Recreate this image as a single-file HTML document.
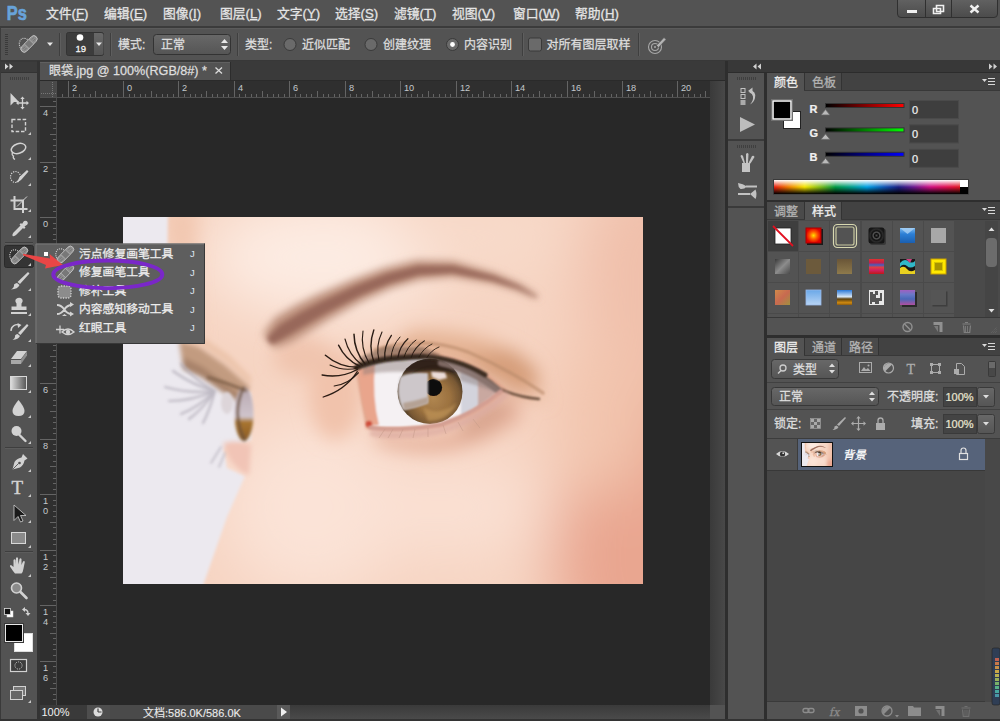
<!DOCTYPE html>
<html><head><meta charset="utf-8"><title>Photoshop</title>
<style>
html,body{margin:0;padding:0;background:#535353;}
body{width:1000px;height:721px;overflow:hidden;position:relative;font-family:"Liberation Sans",sans-serif;}
#r div{position:absolute;}
#ov{position:absolute;left:0;top:0;}
#ov text{font-family:"Liberation Sans","Noto Sans CJK SC",sans-serif;}
</style></head><body>

<div id="r">
<div style="left:0px;top:0px;width:1000px;height:721px;background:#535353;"></div>
<div style="left:0px;top:26px;width:1000px;height:2px;background:#3b3b3b;"></div>
<div style="left:0px;top:60px;width:1000px;height:2px;background:#383838;"></div>
<div style="left:0px;top:28px;width:1000px;height:1px;background:#5b5b5b;"></div>
<div style="left:0px;top:28px;width:1px;height:32px;background:#3c3c3c;"></div>
<div style="left:5px;top:34px;width:3px;height:1px;background:#3a3a3a;"></div>
<div style="left:5px;top:36px;width:3px;height:1px;background:#3a3a3a;"></div>
<div style="left:5px;top:38px;width:3px;height:1px;background:#3a3a3a;"></div>
<div style="left:5px;top:40px;width:3px;height:1px;background:#3a3a3a;"></div>
<div style="left:5px;top:42px;width:3px;height:1px;background:#3a3a3a;"></div>
<div style="left:5px;top:44px;width:3px;height:1px;background:#3a3a3a;"></div>
<div style="left:5px;top:46px;width:3px;height:1px;background:#3a3a3a;"></div>
<div style="left:5px;top:48px;width:3px;height:1px;background:#3a3a3a;"></div>
<div style="left:5px;top:50px;width:3px;height:1px;background:#3a3a3a;"></div>
<div style="left:5px;top:52px;width:3px;height:1px;background:#3a3a3a;"></div>
<div style="left:5px;top:54px;width:3px;height:1px;background:#3a3a3a;"></div>
<div style="left:59px;top:33px;width:1px;height:23px;background:#3f3f3f;"></div>
<div style="left:60px;top:33px;width:1px;height:23px;background:#5e5e5e;"></div>
<div style="left:110px;top:33px;width:1px;height:23px;background:#3f3f3f;"></div>
<div style="left:111px;top:33px;width:1px;height:23px;background:#5e5e5e;"></div>
<div style="left:237px;top:33px;width:1px;height:23px;background:#3f3f3f;"></div>
<div style="left:238px;top:33px;width:1px;height:23px;background:#5e5e5e;"></div>
<div style="left:522px;top:33px;width:1px;height:23px;background:#3f3f3f;"></div>
<div style="left:523px;top:33px;width:1px;height:23px;background:#5e5e5e;"></div>
<div style="left:638px;top:33px;width:1px;height:23px;background:#3f3f3f;"></div>
<div style="left:639px;top:33px;width:1px;height:23px;background:#5e5e5e;"></div>
<div style="left:0px;top:61px;width:1px;height:660px;background:#3a3a3a;"></div>
<div style="left:1px;top:62px;width:36px;height:10px;background:#3c3c3c;"></div>
<div style="left:1px;top:72px;width:36px;height:1px;background:#333;"></div>
<div style="left:37px;top:61px;width:3px;height:660px;background:#333;"></div>
<div style="left:10px;top:77px;width:1px;height:3px;background:#3f3f3f;"></div>
<div style="left:12px;top:77px;width:1px;height:3px;background:#3f3f3f;"></div>
<div style="left:14px;top:77px;width:1px;height:3px;background:#3f3f3f;"></div>
<div style="left:16px;top:77px;width:1px;height:3px;background:#3f3f3f;"></div>
<div style="left:18px;top:77px;width:1px;height:3px;background:#3f3f3f;"></div>
<div style="left:20px;top:77px;width:1px;height:3px;background:#3f3f3f;"></div>
<div style="left:22px;top:77px;width:1px;height:3px;background:#3f3f3f;"></div>
<div style="left:24px;top:77px;width:1px;height:3px;background:#3f3f3f;"></div>
<div style="left:26px;top:77px;width:1px;height:3px;background:#3f3f3f;"></div>
<div style="left:28px;top:77px;width:1px;height:3px;background:#3f3f3f;"></div>
<div style="left:40px;top:61px;width:688px;height:19px;background:#3a3a3a;"></div>
<div style="left:40px;top:62px;width:190px;height:18px;background:#535353;"></div>
<div style="left:40px;top:62px;width:190px;height:1px;background:#606060;"></div>
<div style="left:230px;top:62px;width:1px;height:18px;background:#2c2c2c;"></div>
<div style="left:40px;top:80px;width:688px;height:1px;background:#2a2a2a;"></div>
<div style="left:40px;top:81px;width:670px;height:17px;background:#2f2f2f;"></div>
<div style="left:40px;top:98px;width:17px;height:607px;background:#2f2f2f;"></div>
<div style="left:40px;top:81px;width:16px;height:16px;background:#494949;"></div>
<div style="left:56px;top:81px;width:1px;height:17px;background:#4c4c4c;"></div>
<div style="left:40px;top:97px;width:670px;height:1px;background:#505050;"></div>
<div style="left:56px;top:98px;width:1px;height:607px;background:#4c4c4c;"></div>
<div style="left:57px;top:98px;width:653px;height:607px;background:#282828;"></div>
<div style="left:710px;top:81px;width:15px;height:624px;background:linear-gradient(90deg,#3a3a3a,#484848);"></div>
<div style="left:725px;top:61px;width:3px;height:660px;background:#2e2e2e;"></div>
<div style="left:40px;top:705px;width:670px;height:14px;background:linear-gradient(180deg,#3a3a3a,#4a4a4a);"></div>
<div style="left:710px;top:705px;width:15px;height:14px;background:#535353;"></div>
<div style="left:0px;top:719px;width:1000px;height:2px;background:#333;"></div>
<div style="left:40px;top:705px;width:47px;height:14px;background:#3a3a3a;"></div>
<div style="left:87px;top:705px;width:23px;height:14px;background:#4e4e4e;"></div>
<div style="left:110px;top:705px;width:167px;height:14px;background:#4a4a4a;"></div>
<div style="left:277px;top:705px;width:13px;height:14px;background:#5a5a5a;"></div>
<div style="left:728px;top:61px;width:272px;height:12px;background:#383838;"></div>
<div style="left:728px;top:72px;width:272px;height:1px;background:#2c2c2c;"></div>
<div style="left:728px;top:73px;width:36px;height:646px;background:#535353;"></div>
<div style="left:764px;top:73px;width:3px;height:648px;background:#2e2e2e;"></div>
<div style="left:728px;top:139px;width:36px;height:2px;background:#3a3a3a;"></div>
<div style="left:728px;top:206px;width:36px;height:2px;background:#3a3a3a;"></div>
<div style="left:737px;top:77px;width:1px;height:3px;background:#3f3f3f;"></div>
<div style="left:739px;top:77px;width:1px;height:3px;background:#3f3f3f;"></div>
<div style="left:741px;top:77px;width:1px;height:3px;background:#3f3f3f;"></div>
<div style="left:743px;top:77px;width:1px;height:3px;background:#3f3f3f;"></div>
<div style="left:745px;top:77px;width:1px;height:3px;background:#3f3f3f;"></div>
<div style="left:747px;top:77px;width:1px;height:3px;background:#3f3f3f;"></div>
<div style="left:749px;top:77px;width:1px;height:3px;background:#3f3f3f;"></div>
<div style="left:751px;top:77px;width:1px;height:3px;background:#3f3f3f;"></div>
<div style="left:753px;top:77px;width:1px;height:3px;background:#3f3f3f;"></div>
<div style="left:755px;top:77px;width:1px;height:3px;background:#3f3f3f;"></div>
<div style="left:737px;top:145px;width:1px;height:3px;background:#3f3f3f;"></div>
<div style="left:739px;top:145px;width:1px;height:3px;background:#3f3f3f;"></div>
<div style="left:741px;top:145px;width:1px;height:3px;background:#3f3f3f;"></div>
<div style="left:743px;top:145px;width:1px;height:3px;background:#3f3f3f;"></div>
<div style="left:745px;top:145px;width:1px;height:3px;background:#3f3f3f;"></div>
<div style="left:747px;top:145px;width:1px;height:3px;background:#3f3f3f;"></div>
<div style="left:749px;top:145px;width:1px;height:3px;background:#3f3f3f;"></div>
<div style="left:751px;top:145px;width:1px;height:3px;background:#3f3f3f;"></div>
<div style="left:753px;top:145px;width:1px;height:3px;background:#3f3f3f;"></div>
<div style="left:755px;top:145px;width:1px;height:3px;background:#3f3f3f;"></div>
<div style="left:767px;top:73px;width:233px;height:17px;background:#424242;"></div>
<div style="left:767px;top:90px;width:233px;height:1px;background:#383838;"></div>
<div style="left:767px;top:73px;width:37px;height:18px;background:#535353;"></div>
<div style="left:804px;top:73px;width:1px;height:17px;background:#333;"></div>
<div style="left:805px;top:73px;width:36px;height:17px;background:#4a4a4a;"></div>
<div style="left:841px;top:73px;width:1px;height:17px;background:#333;"></div>
<div style="left:767px;top:91px;width:233px;height:109px;background:#535353;"></div>
<div style="left:767px;top:200px;width:233px;height:3px;background:#2e2e2e;"></div>
<div style="left:767px;top:202px;width:233px;height:17px;background:#424242;"></div>
<div style="left:767px;top:219px;width:233px;height:1px;background:#383838;"></div>
<div style="left:767px;top:202px;width:37px;height:17px;background:#4a4a4a;"></div>
<div style="left:804px;top:202px;width:1px;height:17px;background:#333;"></div>
<div style="left:805px;top:202px;width:36px;height:18px;background:#535353;"></div>
<div style="left:841px;top:202px;width:1px;height:17px;background:#333;"></div>
<div style="left:767px;top:220px;width:233px;height:1px;background:#4a4a4a;"></div>
<div style="left:767px;top:221px;width:233px;height:96px;background:#4a4a4a;"></div>
<div style="left:768px;top:221px;width:30px;height:30px;background:#3e3e3e;"></div>
<div style="left:799px;top:221px;width:30px;height:30px;background:#535353;"></div>
<div style="left:830px;top:221px;width:30px;height:30px;background:#535353;"></div>
<div style="left:862px;top:221px;width:30px;height:30px;background:#535353;"></div>
<div style="left:893px;top:221px;width:30px;height:30px;background:#535353;"></div>
<div style="left:924px;top:221px;width:30px;height:30px;background:#535353;"></div>
<div style="left:768px;top:252px;width:30px;height:30px;background:#535353;"></div>
<div style="left:799px;top:252px;width:30px;height:30px;background:#535353;"></div>
<div style="left:830px;top:252px;width:30px;height:30px;background:#535353;"></div>
<div style="left:862px;top:252px;width:30px;height:30px;background:#535353;"></div>
<div style="left:893px;top:252px;width:30px;height:30px;background:#535353;"></div>
<div style="left:924px;top:252px;width:30px;height:30px;background:#535353;"></div>
<div style="left:768px;top:283px;width:30px;height:30px;background:#535353;"></div>
<div style="left:799px;top:283px;width:30px;height:30px;background:#535353;"></div>
<div style="left:830px;top:283px;width:30px;height:30px;background:#535353;"></div>
<div style="left:862px;top:283px;width:30px;height:30px;background:#535353;"></div>
<div style="left:893px;top:283px;width:30px;height:30px;background:#535353;"></div>
<div style="left:924px;top:283px;width:30px;height:30px;background:#535353;"></div>
<div style="left:768px;top:314px;width:30px;height:3px;background:#535353;"></div>
<div style="left:799px;top:314px;width:30px;height:3px;background:#535353;"></div>
<div style="left:830px;top:314px;width:30px;height:3px;background:#535353;"></div>
<div style="left:862px;top:314px;width:30px;height:3px;background:#535353;"></div>
<div style="left:893px;top:314px;width:30px;height:3px;background:#535353;"></div>
<div style="left:924px;top:314px;width:30px;height:3px;background:#535353;"></div>
<div style="left:985px;top:221px;width:13px;height:96px;background:#454545;"></div>
<div style="left:986px;top:238px;width:11px;height:29px;background:#6c6c6c;border-radius:4px;"></div>
<div style="left:767px;top:317px;width:233px;height:1px;background:#383838;"></div>
<div style="left:767px;top:318px;width:233px;height:17px;background:#535353;"></div>
<div style="left:767px;top:335px;width:233px;height:3px;background:#2e2e2e;"></div>
<div style="left:767px;top:338px;width:233px;height:17px;background:#424242;"></div>
<div style="left:767px;top:355px;width:233px;height:1px;background:#383838;"></div>
<div style="left:767px;top:338px;width:37px;height:18px;background:#535353;"></div>
<div style="left:804px;top:338px;width:1px;height:17px;background:#333;"></div>
<div style="left:805px;top:338px;width:36px;height:17px;background:#4a4a4a;"></div>
<div style="left:841px;top:338px;width:1px;height:17px;background:#333;"></div>
<div style="left:842px;top:338px;width:36px;height:17px;background:#4a4a4a;"></div>
<div style="left:878px;top:338px;width:1px;height:17px;background:#333;"></div>
<div style="left:767px;top:356px;width:233px;height:1px;background:#535353;"></div>
<div style="left:767px;top:357px;width:233px;height:82px;background:#535353;"></div>
<div style="left:767px;top:382px;width:233px;height:1px;background:#414141;"></div>
<div style="left:767px;top:409px;width:233px;height:1px;background:#414141;"></div>
<div style="left:767px;top:438px;width:233px;height:1px;background:#3c3c3c;"></div>
<div style="left:767px;top:439px;width:233px;height:263px;background:#464646;"></div>
<div style="left:767px;top:702px;width:233px;height:17px;background:#535353;"></div>
<div style="left:767px;top:701px;width:233px;height:1px;background:#3a3a3a;"></div>
<div style="left:767px;top:439px;width:31px;height:31px;background:#535353;"></div>
<div style="left:798px;top:439px;width:187px;height:31px;background:#56637a;"></div>
<div style="left:767px;top:470px;width:218px;height:1px;background:#383838;"></div>
<div style="left:797px;top:439px;width:1px;height:31px;background:#3c3c3c;"></div>
<div style="left:985px;top:439px;width:15px;height:263px;background:#484848;"></div>
<div style="left:5px;top:242px;width:28px;height:1px;background:#3e3e3e;"></div>
<div style="left:5px;top:243px;width:28px;height:1px;background:#5c5c5c;"></div>
<div style="left:5px;top:447px;width:28px;height:1px;background:#3e3e3e;"></div>
<div style="left:5px;top:448px;width:28px;height:1px;background:#5c5c5c;"></div>
<div style="left:5px;top:551px;width:28px;height:1px;background:#3e3e3e;"></div>
<div style="left:5px;top:552px;width:28px;height:1px;background:#5c5c5c;"></div>
</div>
<svg id="ov" width="1000" height="721" viewBox="0 0 1000 721">
<defs>

<linearGradient id="btn" x1="0" y1="0" x2="0" y2="1"><stop offset="0" stop-color="#686868"/><stop offset="1" stop-color="#555"/></linearGradient>
<linearGradient id="wbtn" x1="0" y1="0" x2="0" y2="1"><stop offset="0" stop-color="#626262"/><stop offset="1" stop-color="#4b4b4b"/></linearGradient>
<linearGradient id="gr" x1="0" y1="0" x2="1" y2="0"><stop offset="0" stop-color="#000"/><stop offset="1" stop-color="#f00"/></linearGradient>
<linearGradient id="gg" x1="0" y1="0" x2="1" y2="0"><stop offset="0" stop-color="#000"/><stop offset="1" stop-color="#0f0"/></linearGradient>
<linearGradient id="gb" x1="0" y1="0" x2="1" y2="0"><stop offset="0" stop-color="#000"/><stop offset="1" stop-color="#00f"/></linearGradient>
<linearGradient id="spec" x1="0" y1="0" x2="1" y2="0">
<stop offset="0" stop-color="#e81c10"/><stop offset="0.08" stop-color="#f08000"/><stop offset="0.165" stop-color="#f4e400"/><stop offset="0.26" stop-color="#70b820"/><stop offset="0.33" stop-color="#009a44"/><stop offset="0.42" stop-color="#00a090"/><stop offset="0.5" stop-color="#00a0e4"/><stop offset="0.6" stop-color="#1050b0"/><stop offset="0.67" stop-color="#1c2084"/><stop offset="0.75" stop-color="#6a1a90"/><stop offset="0.84" stop-color="#d01084"/><stop offset="0.93" stop-color="#e01050"/><stop offset="1" stop-color="#e01820"/></linearGradient>
<linearGradient id="specv" x1="0" y1="0" x2="0" y2="1"><stop offset="0" stop-color="#fff"/><stop offset="0.5" stop-color="#fff" stop-opacity="0"/><stop offset="0.5" stop-color="#000" stop-opacity="0"/><stop offset="1" stop-color="#000"/></linearGradient>

<clipPath id="pclip"><rect x="0" y="0" width="520" height="367"/></clipPath>
<clipPath id="irisclip"><circle cx="307" cy="174.500" r="33"/></clipPath>
<clipPath id="eyeclip"><path d="M236 152 C250 144 270 141 300 140 C330 141 356 153 377 173 C362 186 345 197 318 206 C290 211 262 211 247 209 C243 190 239 168 236 152 Z"/></clipPath>
<filter id="b30" x="-50%" y="-50%" width="200%" height="200%"><feGaussianBlur stdDeviation="30"/></filter>
<filter id="b12" x="-50%" y="-50%" width="200%" height="200%"><feGaussianBlur stdDeviation="9"/></filter>
<filter id="b5" x="-50%" y="-50%" width="200%" height="200%"><feGaussianBlur stdDeviation="4"/></filter>
<filter id="b3" x="-50%" y="-50%" width="200%" height="200%"><feGaussianBlur stdDeviation="2.500"/></filter>
<filter id="b2" x="-50%" y="-50%" width="200%" height="200%"><feGaussianBlur stdDeviation="1.600"/></filter>
<filter id="b1" x="-50%" y="-50%" width="200%" height="200%"><feGaussianBlur stdDeviation="0.900"/></filter>
<filter id="b05" x="-50%" y="-50%" width="200%" height="200%"><feGaussianBlur stdDeviation="0.450"/></filter>
<linearGradient id="fariris" x1="0" y1="0" x2="0" y2="1"><stop offset="0" stop-color="#b8a8b0"/><stop offset="0.55" stop-color="#cfc4cc"/><stop offset="0.65" stop-color="#a8742e"/><stop offset="1" stop-color="#8a5c28"/></linearGradient>
<radialGradient id="iris" cx="0.55" cy="0.6" r="0.52"><stop offset="0" stop-color="#b08650"/><stop offset="0.5" stop-color="#9c7240"/><stop offset="0.8" stop-color="#785834"/><stop offset="0.95" stop-color="#4c3a24"/><stop offset="1" stop-color="#5e4c34"/></radialGradient>
<linearGradient id="gradtool" x1="0" y1="0" x2="1" y2="0"><stop offset="0" stop-color="#e0e0e0"/><stop offset="1" stop-color="#555"/></linearGradient>
<radialGradient id="s1"><stop offset="0" stop-color="#ffe000"/><stop offset="0.5" stop-color="#ff5a00"/><stop offset="1" stop-color="#e00000"/></radialGradient>
<radialGradient id="s3"><stop offset="0" stop-color="#4a4a4a"/><stop offset="0.25" stop-color="#0c0c0c"/><stop offset="0.42" stop-color="#5a5a5a"/><stop offset="0.58" stop-color="#101010"/><stop offset="0.8" stop-color="#2c2c2c"/><stop offset="1" stop-color="#161616"/></radialGradient>
<linearGradient id="s4" x1="0" y1="0" x2="0" y2="1"><stop offset="0" stop-color="#7ab8ee"/><stop offset="0.4" stop-color="#2c7fd6"/><stop offset="1" stop-color="#1a5fb0"/></linearGradient>
<linearGradient id="s6" x1="0" y1="0" x2="1" y2="1"><stop offset="0" stop-color="#3a3a3a"/><stop offset="0.5" stop-color="#8c8c8c"/><stop offset="1" stop-color="#4a4a4a"/></linearGradient>
<linearGradient id="s8" x1="0" y1="0" x2="0" y2="1"><stop offset="0" stop-color="#6a5638"/><stop offset="1" stop-color="#8e7a4c"/></linearGradient>
<linearGradient id="s9" x1="0" y1="0" x2="0" y2="1"><stop offset="0" stop-color="#e03030"/><stop offset="0.25" stop-color="#c02050"/><stop offset="0.4" stop-color="#4060c0"/><stop offset="0.55" stop-color="#e04040"/><stop offset="0.75" stop-color="#d02060"/><stop offset="1" stop-color="#c01818"/></linearGradient>
<linearGradient id="s12" x1="0" y1="0" x2="1" y2="1"><stop offset="0" stop-color="#d08a4a"/><stop offset="0.5" stop-color="#c86a50"/><stop offset="1" stop-color="#a09040"/></linearGradient>
<linearGradient id="s13" x1="0" y1="0" x2="0" y2="1"><stop offset="0" stop-color="#6aa8e8"/><stop offset="1" stop-color="#b8d4f4"/></linearGradient>
<linearGradient id="s14" x1="0" y1="0" x2="0" y2="1"><stop offset="0" stop-color="#2a78d8"/><stop offset="0.45" stop-color="#d8e8f8"/><stop offset="0.6" stop-color="#5a4010"/><stop offset="0.85" stop-color="#d08a10"/><stop offset="1" stop-color="#8a5a10"/></linearGradient>
<linearGradient id="s16" x1="0" y1="0" x2="0" y2="1"><stop offset="0" stop-color="#a060c0"/><stop offset="0.3" stop-color="#6a78c8"/><stop offset="0.6" stop-color="#4a68b8"/><stop offset="1" stop-color="#b050a0"/></linearGradient>

</defs>
<g transform="translate(6.8,19.6) scale(0.78,1)"><text x="0" y="0" font-size="21" font-weight="bold" fill="#68a3da" stroke="#68a3da" stroke-width="0.7">Ps</text></g>
<text x="46" y="18" font-size="12.8" fill="#e4e4e4" stroke="#e4e4e4" stroke-width="0.28">文件<tspan font-size="13.2">(<tspan text-decoration="underline">F</tspan>)</tspan></text>
<text x="104" y="18" font-size="12.8" fill="#e4e4e4" stroke="#e4e4e4" stroke-width="0.28">编辑<tspan font-size="13.2">(<tspan text-decoration="underline">E</tspan>)</tspan></text>
<text x="163" y="18" font-size="12.8" fill="#e4e4e4" stroke="#e4e4e4" stroke-width="0.28">图像<tspan font-size="13.2">(<tspan text-decoration="underline">I</tspan>)</tspan></text>
<text x="220" y="18" font-size="12.8" fill="#e4e4e4" stroke="#e4e4e4" stroke-width="0.28">图层<tspan font-size="13.2">(<tspan text-decoration="underline">L</tspan>)</tspan></text>
<text x="277" y="18" font-size="12.8" fill="#e4e4e4" stroke="#e4e4e4" stroke-width="0.28">文字<tspan font-size="13.2">(<tspan text-decoration="underline">Y</tspan>)</tspan></text>
<text x="335" y="18" font-size="12.8" fill="#e4e4e4" stroke="#e4e4e4" stroke-width="0.28">选择<tspan font-size="13.2">(<tspan text-decoration="underline">S</tspan>)</tspan></text>
<text x="394" y="18" font-size="12.8" fill="#e4e4e4" stroke="#e4e4e4" stroke-width="0.28">滤镜<tspan font-size="13.2">(<tspan text-decoration="underline">T</tspan>)</tspan></text>
<text x="452" y="18" font-size="12.8" fill="#e4e4e4" stroke="#e4e4e4" stroke-width="0.28">视图<tspan font-size="13.2">(<tspan text-decoration="underline">V</tspan>)</tspan></text>
<text x="513" y="18" font-size="12.8" fill="#e4e4e4" stroke="#e4e4e4" stroke-width="0.28">窗口<tspan font-size="13.2">(<tspan text-decoration="underline">W</tspan>)</tspan></text>
<text x="575" y="18" font-size="12.8" fill="#e4e4e4" stroke="#e4e4e4" stroke-width="0.28">帮助<tspan font-size="13.2">(<tspan text-decoration="underline">H</tspan>)</tspan></text>
<path d="M897.5 -1 V14 Q897.5 17.5 901 17.5 H994 Q997.5 17.5 997.5 14 V-1 Z" fill="url(#wbtn)" stroke="#303030" stroke-width="1"/>
<path d="M925.5 0 V17 M951.5 0 V17" stroke="#303030" stroke-width="1"/>
<rect x="907" y="10" width="10" height="3" fill="#f0f0f0"/>
<path d="M936.5 5.5 h7 v6 h-7 z M933.5 8.5 h7 v5 h-7 z" fill="none" stroke="#f0f0f0" stroke-width="1.6"/>
<path d="M970.5 5.5 L978.5 12.5 M978.5 5.5 L970.5 12.5" stroke="#f0f0f0" stroke-width="2.4"/>
<path d="M47 42.5 h6 l-3 3.500 z" fill="#e8e8e8"/>
<rect x="66.500" y="32.500" width="37" height="23" rx="2" fill="#3c3c3c" stroke="#333"/>
<path d="M94 33 h7 q2.500 0 2.500 2.500 v17 q0 2.500 -2.500 2.500 h-7 z" fill="url(#btn)"/>
<circle cx="80" cy="37.500" r="3.300" fill="#fff"/>
<path d="M96 42.500 h6 l-3 3.500 z" fill="#e8e8e8"/>
<text x="75.5" y="52" font-size="9.5" fill="#f4f4f4" stroke="#f4f4f4" stroke-width="0.29">19</text>
<text x="118" y="48.5" font-size="12" fill="#dedede" stroke="#dedede" stroke-width="0.26">模式:</text>
<rect x="153.500" y="34.500" width="77" height="20" rx="3" fill="url(#btn)" stroke="#333"/>
<text x="161" y="49" font-size="12" fill="#dedede" stroke="#dedede" stroke-width="0.26">正常</text>
<path d="M221 43 l3.500 -4 l3.500 4 z M221 46 l3.500 4 l3.500 -4 z" fill="#e8e8e8"/>
<text x="245" y="48.5" font-size="12" fill="#dedede" stroke="#dedede" stroke-width="0.26">类型:</text>
<circle cx="290" cy="44.500" r="6" fill="#6a6a6a" stroke="#3a3a3a" stroke-width="1"/>
<text x="302" y="48.5" font-size="12" fill="#dedede" stroke="#dedede" stroke-width="0.26">近似匹配</text>
<circle cx="371" cy="44.500" r="6" fill="#6a6a6a" stroke="#3a3a3a" stroke-width="1"/>
<text x="383" y="48.5" font-size="12" fill="#dedede" stroke="#dedede" stroke-width="0.26">创建纹理</text>
<circle cx="452.500" cy="44.500" r="6" fill="#6a6a6a" stroke="#3a3a3a" stroke-width="1"/>
<circle cx="452.500" cy="44.500" r="2.400" fill="#fff"/>
<text x="464" y="48.5" font-size="12" fill="#dedede" stroke="#dedede" stroke-width="0.26">内容识别</text>
<rect x="528.500" y="38" width="13" height="13" rx="2" fill="#6a6a6a" stroke="#3a3a3a"/>
<text x="546.5" y="48.5" font-size="12" fill="#dedede" stroke="#dedede" stroke-width="0.26">对所有图层取样</text>
<path d="M5 63.5 l3.500 3 l-3.500 3 z M9.500 63.500 l3.500 3 l-3.500 3 z" fill="#d8d8d8"/>
<text x="49" y="75" font-size="12" fill="#dedede" stroke="#dedede" stroke-width="0.26">眼袋<tspan font-size="12.6">.jpg @ 100%(RGB/8#) *</tspan></text>
<path d="M215.500 67.500 l6.500 6 M222 67.500 l-6.500 6" stroke="#ddd" stroke-width="1.300"/>
<path d="M52.500 82 V97 M41 93.500 H56" stroke="#777" stroke-width="1" stroke-dasharray="1 1"/>
<path d="M62.5 97 v-3 M68.5 97 v-16 M73.5 97 v-3 M79.5 97 v-3 M84.5 97 v-3 M90.5 97 v-3 M95.5 97 v-6 M101.5 97 v-3 M106.5 97 v-3 M112.5 97 v-3 M117.5 97 v-3 M123.5 97 v-16 M129.5 97 v-3 M134.5 97 v-3 M140.5 97 v-3 M145.5 97 v-3 M151.5 97 v-6 M156.5 97 v-3 M162.5 97 v-3 M167.5 97 v-3 M173.5 97 v-3 M178.5 97 v-16 M184.5 97 v-3 M190.5 97 v-3 M195.5 97 v-3 M201.5 97 v-3 M206.5 97 v-6 M212.5 97 v-3 M217.5 97 v-3 M223.5 97 v-3 M228.5 97 v-3 M234.5 97 v-16 M239.5 97 v-3 M245.5 97 v-3 M251.5 97 v-3 M256.5 97 v-3 M262.5 97 v-6 M267.5 97 v-3 M273.5 97 v-3 M278.5 97 v-3 M284.5 97 v-3 M289.5 97 v-16 M295.5 97 v-3 M300.5 97 v-3 M306.5 97 v-3 M311.5 97 v-3 M317.5 97 v-6 M323.5 97 v-3 M328.5 97 v-3 M334.5 97 v-3 M339.5 97 v-3 M345.5 97 v-16 M350.5 97 v-3 M356.5 97 v-3 M361.5 97 v-3 M367.5 97 v-3 M372.5 97 v-6 M378.5 97 v-3 M384.5 97 v-3 M389.5 97 v-3 M395.5 97 v-3 M400.5 97 v-16 M406.5 97 v-3 M411.5 97 v-3 M417.5 97 v-3 M422.5 97 v-3 M428.5 97 v-6 M433.5 97 v-3 M439.5 97 v-3 M445.5 97 v-3 M450.5 97 v-3 M456.5 97 v-16 M461.5 97 v-3 M467.5 97 v-3 M472.5 97 v-3 M478.5 97 v-3 M483.5 97 v-6 M489.5 97 v-3 M494.5 97 v-3 M500.5 97 v-3 M506.5 97 v-3 M511.5 97 v-16 M517.5 97 v-3 M522.5 97 v-3 M528.5 97 v-3 M533.5 97 v-3 M539.5 97 v-6 M544.5 97 v-3 M550.5 97 v-3 M555.5 97 v-3 M561.5 97 v-3 M567.5 97 v-16 M572.5 97 v-3 M578.5 97 v-3 M583.5 97 v-3 M589.5 97 v-3 M594.5 97 v-6 M600.5 97 v-3 M605.5 97 v-3 M611.5 97 v-3 M616.5 97 v-3 M622.5 97 v-16 M628.5 97 v-3 M633.5 97 v-3 M639.5 97 v-3 M644.5 97 v-3 M650.5 97 v-6 M655.5 97 v-3 M661.5 97 v-3 M666.5 97 v-3 M672.5 97 v-3 M677.5 97 v-16 M683.5 97 v-3 M688.5 97 v-3 M694.5 97 v-3 M700.5 97 v-3 M705.5 97 v-6 M56 101.5 h-3 M56 106.5 h-16 M56 112.5 h-3 M56 117.5 h-3 M56 123.5 h-3 M56 128.5 h-3 M56 134.5 h-6 M56 139.5 h-3 M56 145.5 h-3 M56 150.5 h-3 M56 156.5 h-3 M56 162.5 h-16 M56 167.5 h-3 M56 173.5 h-3 M56 178.5 h-3 M56 184.5 h-3 M56 189.5 h-6 M56 195.5 h-3 M56 200.5 h-3 M56 206.5 h-3 M56 211.5 h-3 M56 217.5 h-16 M56 223.5 h-3 M56 228.5 h-3 M56 234.5 h-3 M56 239.5 h-3 M56 245.5 h-6 M56 250.5 h-3 M56 256.5 h-3 M56 261.5 h-3 M56 267.5 h-3 M56 272.5 h-16 M56 278.5 h-3 M56 284.5 h-3 M56 289.5 h-3 M56 295.5 h-3 M56 300.5 h-6 M56 306.5 h-3 M56 311.5 h-3 M56 317.5 h-3 M56 322.5 h-3 M56 328.5 h-16 M56 333.5 h-3 M56 339.5 h-3 M56 345.5 h-3 M56 350.5 h-3 M56 356.5 h-6 M56 361.5 h-3 M56 367.5 h-3 M56 372.5 h-3 M56 378.5 h-3 M56 383.5 h-16 M56 389.5 h-3 M56 394.5 h-3 M56 400.5 h-3 M56 405.5 h-3 M56 411.5 h-6 M56 417.5 h-3 M56 422.5 h-3 M56 428.5 h-3 M56 433.5 h-3 M56 439.5 h-16 M56 444.5 h-3 M56 450.5 h-3 M56 455.5 h-3 M56 461.5 h-3 M56 466.5 h-6 M56 472.5 h-3 M56 478.5 h-3 M56 483.5 h-3 M56 489.5 h-3 M56 494.5 h-16 M56 500.5 h-3 M56 505.5 h-3 M56 511.5 h-3 M56 516.5 h-3 M56 522.5 h-6 M56 527.5 h-3 M56 533.5 h-3 M56 539.5 h-3 M56 544.5 h-3 M56 550.5 h-16 M56 555.5 h-3 M56 561.5 h-3 M56 566.5 h-3 M56 572.5 h-3 M56 577.5 h-6 M56 583.5 h-3 M56 588.5 h-3 M56 594.5 h-3 M56 600.5 h-3 M56 605.5 h-16 M56 611.5 h-3 M56 616.5 h-3 M56 622.5 h-3 M56 627.5 h-3 M56 633.5 h-6 M56 638.5 h-3 M56 644.5 h-3 M56 649.5 h-3 M56 655.5 h-3 M56 661.5 h-16 M56 666.5 h-3 M56 672.5 h-3 M56 677.5 h-3 M56 683.5 h-3 M56 688.5 h-6 M56 694.5 h-3 M56 699.5 h-3" stroke="#646464" stroke-width="1"/>
<text x="72" y="91" font-size="9.2" fill="#c4c8cc">2</text>
<text x="127" y="91" font-size="9.2" fill="#c4c8cc">0</text>
<text x="182" y="91" font-size="9.2" fill="#c4c8cc">2</text>
<text x="238" y="91" font-size="9.2" fill="#c4c8cc">4</text>
<text x="293" y="91" font-size="9.2" fill="#c4c8cc">6</text>
<text x="349" y="91" font-size="9.2" fill="#c4c8cc">8</text>
<text x="404" y="91" font-size="9.2" fill="#c4c8cc">10</text>
<text x="460" y="91" font-size="9.2" fill="#c4c8cc">12</text>
<text x="515" y="91" font-size="9.2" fill="#c4c8cc">14</text>
<text x="571" y="91" font-size="9.2" fill="#c4c8cc">16</text>
<text x="626" y="91" font-size="9.2" fill="#c4c8cc">18</text>
<text x="681" y="91" font-size="9.2" fill="#c4c8cc">20</text>
<text x="43" y="116" font-size="9.2" fill="#c4c8cc">4</text>
<text x="43" y="172" font-size="9.2" fill="#c4c8cc">2</text>
<text x="43" y="227" font-size="9.2" fill="#c4c8cc">0</text>
<text x="43" y="282" font-size="9.2" fill="#c4c8cc">2</text>
<text x="43" y="338" font-size="9.2" fill="#c4c8cc">4</text>
<text x="43" y="393" font-size="9.2" fill="#c4c8cc">6</text>
<text x="43" y="449" font-size="9.2" fill="#c4c8cc">8</text>
<text x="43" y="504" font-size="9.2" fill="#c4c8cc">1</text>
<text x="43" y="513.5" font-size="9.2" fill="#c4c8cc">0</text>
<text x="43" y="560" font-size="9.2" fill="#c4c8cc">1</text>
<text x="43" y="569.5" font-size="9.2" fill="#c4c8cc">2</text>
<text x="43" y="615" font-size="9.2" fill="#c4c8cc">1</text>
<text x="43" y="624.5" font-size="9.2" fill="#c4c8cc">4</text>
<text x="43" y="671" font-size="9.2" fill="#c4c8cc">1</text>
<text x="43" y="680.5" font-size="9.2" fill="#c4c8cc">6</text>
<text x="41.5" y="716" font-size="11" fill="#f0f0f0">100%</text>
<circle cx="98" cy="712" r="4.500" fill="#ddd"/><path d="M98 712 v-3.500 M98 712 h3.500" stroke="#444" stroke-width="1.200"/>
<text x="143" y="716.5" font-size="11" fill="#ececec" stroke="#ececec" stroke-width="0.11">文档:586.0K/586.0K</text>
<path d="M281 707.500 v9 l6 -4.500 z" fill="#f0f0f0"/>
<g transform="translate(123,217)" clip-path="url(#pclip)">
<rect x="0" y="0" width="520" height="367" fill="#f6d4c2"/>
<g filter="url(#b30)">
<ellipse cx="570" cy="340" rx="140" ry="170" fill="#e9a690"/>
<ellipse cx="555" cy="60" rx="100" ry="120" fill="#f0c0ab"/>
<ellipse cx="480" cy="200" rx="50" ry="80" fill="#f2c5ae"/>
<ellipse cx="200" cy="40" rx="120" ry="60" fill="#fdece3"/>
<ellipse cx="190" cy="290" rx="90" ry="90" fill="#fbe3d7"/>
<ellipse cx="330" cy="290" rx="90" ry="50" fill="#fae0d3"/>
<ellipse cx="360" cy="20" rx="90" ry="30" fill="#f8dccc"/>
</g>
<g filter="url(#b12)">
<path d="M40 -10 L75 -10 L70 60 L75 125 L60 125 Z" fill="#f2c7b0"/>
<ellipse cx="212" cy="178" rx="26" ry="45" fill="#f1c3ac"/>
<ellipse cx="180" cy="140" rx="30" ry="20" fill="#f0c4ae"/>
<path d="M235 142 Q300 104 370 140 Q400 158 425 185 L385 172 Q310 122 235 150 Z" fill="#e0ab8a"/>
<ellipse cx="380" cy="148" rx="40" ry="17" fill="#d69e7a" transform="rotate(27 380 148)"/>
<ellipse cx="330" cy="125" rx="50" ry="10" fill="#e6b596" transform="rotate(8 330 125)"/>
<path d="M250 214 Q320 232 370 192 L392 176 L400 200 Q335 252 255 228 Z" fill="#e6b29c"/>
<ellipse cx="362" cy="200" rx="30" ry="12" fill="#d8a48e" transform="rotate(-33 362 200)"/>
</g>
<g filter="url(#b2)">
<path d="M-10 -10 L45 -10 L44 60 L49 118 L58 127 L120 171 L128 176 L128 223 L118 227 L101 231 L104 251 L122 259 L104 300 L80.600 367 L80 377 L-10 377 Z" fill="#ece9ef"/>
</g>
<g filter="url(#b3)">
<path d="M56 124 L76 130 L102 148 L127 170 L120 182 L100 171 L80 157 L60 150 Z" fill="#c29b80"/>
<path d="M60 140 L80 150 L100 165 L120 180 L118 186 L98 174 L78 160 L60 152 Z" fill="#a8836a"/>
<path d="M56 122 L78 128 L104 146 L128 168 L128 160 L106 138 L80 120 L58 112 Z" fill="#ecc5ac"/>
<path d="M100 226 Q114 222 128 228 L126 258 Q108 252 100 226 Z" fill="#f1c4b6"/>
</g>
<g filter="url(#b2)">
<ellipse cx="104" cy="186" rx="6" ry="11" fill="#ddd5d9"/>
<ellipse cx="121" cy="197" rx="9.500" ry="27" fill="url(#fariris)"/>
<path d="M121 170 Q108 196 122 224" stroke="#6e5238" stroke-width="2.500" fill="none"/>
<path d="M84 160 Q104 166 124 174" stroke="#7a5c46" stroke-width="3" fill="none" opacity="0.800"/>
</g>
<g filter="url(#b2)" stroke="#b6b1bc" stroke-width="2.200" fill="none" stroke-linecap="round" opacity="0.850">
<path d="M92 174 Q67.0 177.0 42 170"/>
<path d="M92 174 Q71.0 169.0 50 154"/>
<path d="M92 174 Q75.0 165.5 58 147"/>
<path d="M92 174 Q69.0 184.0 46 184"/>
<path d="M92 174 Q75.0 190.5 58 197"/>
<path d="M92 174 Q79.0 193.0 66 202"/>
<path d="M92 174 Q86.0 195.0 80 206"/>
<path d="M98 230 L88 246 M102 236 L96 250" stroke-width="1.600"/>
</g>
<g filter="url(#b5)">
<path d="M140.4 116.9 L151.9 101.0 L172.8 88.4 L193.9 78.0 L230.3 62.5 L261.7 51.0 L293.7 43.6 L330.8 44.5 L371.3 56.2 L396.3 67.0 L414.7 78.7 L413.3 81.3 L393.7 73.0 L368.7 65.8 L329.2 59.5 L296.3 62.4 L268.3 71.0 L239.7 83.5 L206.1 102.0 L187.2 113.6 L168.1 125.0 L151.6 131.1 Z" fill="#b98c78"/>
</g>
<g filter="url(#b3)">
<path d="M143.8 121.2 L156.8 108.2 L177.1 96.0 L197.6 85.2 L233.1 68.8 L263.7 57.0 L294.5 49.2 L330.3 49.0 L370.5 59.1 L395.5 68.8 L414.3 79.5 L413.7 80.7 L394.4 71.5 L369.3 63.4 L329.6 55.7 L295.7 57.7 L266.7 66.0 L237.3 78.3 L203.1 96.0 L183.6 107.3 L164.1 119.0 L148.8 127.5 Z" fill="#98685a"/>
</g>
<g filter="url(#b2)">
<path d="M232 150 C250 140 270 137 300 136 C334 137 362 150 384 173 C366 190 348 201 319 210 C290 215 260 215 243 212 C239 190 235 168 232 150 Z" fill="#e2a88f"/>
</g><g filter="url(#b1)">
<path d="M236 152 C250 144 270 141 300 140 C330 141 356 153 377 173 C362 186 345 197 318 206 C290 211 262 211 247 209 C243 190 239 168 236 152 Z" fill="#f5f1f3"/>
<path d="M338 146 Q362 158 377 173 Q360 188 338 199 Z" fill="#d3d3dc"/>
<path d="M355 156 L377 173 L355 190 Z" fill="#c9a8a0"/>
<path d="M236 152 Q238 190 247 209 L256 208 Q249 180 252 147 Z" fill="#e9a58c"/>
<circle cx="246" cy="207" r="3.200" fill="#cf4e3a"/>
</g>
<g clip-path="url(#eyeclip)">
<path d="M240 146 Q300 134 380 168 L380 178 Q300 146 240 158 Z" fill="#8a7a78" opacity="0.450" filter="url(#b2)"/>
<circle cx="307" cy="174.500" r="32.500" fill="url(#iris)" filter="url(#b05)"/>
<path d="M300 190 Q315 200 334 186 Q325 204 305 204 Z" fill="#c09458" opacity="0.700" filter="url(#b2)"/>
<circle cx="310.500" cy="170.500" r="8.600" fill="#0c0808" filter="url(#b05)"/>
<path d="M277 160 Q288 154 305 156 L305 186 Q292 191 280 193 Q272 178 277 160 Z" fill="#cdc7ca" filter="url(#b1)"/>
<path d="M280 186 Q292 184 305 180 L305 186 Q292 191 281 193 Z" fill="#b5a294" filter="url(#b1)"/>
<path d="M308 154 L322 155 L324 161 L316 163 L309 160 Z" fill="#ecdcd8" filter="url(#b1)"/>
<g clip-path="url(#irisclip)"><path d="M268 134 Q307 128 347 144 L347 158 Q307 150 268 157 Z" fill="#2a1c12" opacity="0.850" filter="url(#b2)"/></g>
</g>
<g filter="url(#b1)" fill="none" stroke-linecap="round">
<path d="M300 139.500 C330 141 356 153 377 172 Q395 180 416 182" stroke="#6b4f3c" stroke-width="2.500"/>
<path d="M318 146 C338 150 360 161 376 174" stroke="#85706a" stroke-width="6.500" opacity="0.900"/>
<path d="M234 150.500 C250 143 270 140.500 300 139.500" stroke="#33251c" stroke-width="5.500"/>
<path d="M300 139.500 C322 140.500 342 146 362 158" stroke="#3e2e24" stroke-width="5"/>
<path d="M252 133 Q300 118 345 135 Q385 152 420 176" stroke="#b98a6a" stroke-width="3.500" opacity="0.600"/>
<path d="M247 210.500 C262 213 290 213 318 207.500 C346 198 363 187 378 174" stroke="#d29d92" stroke-width="3.500"/>
<path d="M250 216 C264 219 292 219 320 213 C348 204 367 192 382 178" stroke="#dcaaa0" stroke-width="7" opacity="0.650" filter="url(#b2)"/>
</g>
<path d="M232 152 L238 140 L262 130 L300 130 L318 138 L300 142 L262 143 L240 150 Z" fill="#3a2a22" opacity="0.400" filter="url(#b2)"/>
<g fill="none" stroke="#2a1c14" stroke-linecap="round" filter="url(#b05)">
<path d="M234.3 150.3 Q216.2 150.0 202.4 138.2" stroke-width="1.5"/>
<path d="M236.5 149.2 Q222.3 142.5 215.6 128.3" stroke-width="1.5"/>
<path d="M242 147 Q231.2 134.1 231 117.3" stroke-width="1.5"/>
<path d="M250.8 144.8 Q245.1 128.9 250.8 112.9" stroke-width="1.4"/>
<path d="M261.8 142.6 Q260.7 129.3 268.4 118.4" stroke-width="1.3"/>
<path d="M275 140.4 Q276.6 129.3 284.9 121.7" stroke-width="1.2"/>
<path d="M288.2 140.4 Q291.8 129.8 301.4 123.9" stroke-width="1.1"/>
<path d="M234.3 152.5 Q217.7 161.6 199.1 158" stroke-width="1.4"/>
<path d="M234.3 154.7 Q221.8 173.5 200.2 180" stroke-width="1.3"/>
<path d="M235.4 155.8 Q225.7 166.8 211.2 169" stroke-width="1.2"/>
<path d="M239 148 Q225.8 138.1 222 122" stroke-width="1.1"/>
<path d="M246 146 Q237.2 131.1 240 114" stroke-width="1.1"/>
<path d="M256 143.5 Q252.4 128.7 259 115" stroke-width="1.1"/>
<path d="M268 141.5 Q268.6 129.1 277 120" stroke-width="1"/>
<path d="M281 140.4 Q283.9 129.5 293 123" stroke-width="1"/>
<path d="M235 151 Q220.5 154.5 207 148" stroke-width="1.1"/>
<path d="M296 140 Q300.2 131.2 309 127" stroke-width="0.9"/>
<path d="M304 140.5 Q308.1 133.1 316 130" stroke-width="0.9"/>
</g>
<g fill="none" stroke="#c39888" stroke-width="0.900" opacity="0.550" filter="url(#b05)">
<path d="M262 212.0 L256 221.0"/>
<path d="M270 212.0 L265 221.0"/>
<path d="M280 212.0 L276 221.0"/>
<path d="M292 212.0 L290 221.0"/>
<path d="M305 211.0 L305 220.0"/>
<path d="M320 208.0 L323 217.0"/>
<path d="M335 205.0 L340 214.0"/>
<path d="M350 202.0 L357 211.0"/>
</g>
</g>
<path d="M756.500 63.500 l-3.500 3 l3.500 3 z M761 63.500 l-3.500 3 l3.500 3 z" fill="#d0d0d0"/>
<path d="M989 63.500 l3.500 3 l-3.500 3 z M993.500 63.500 l3.500 3 l-3.500 3 z" fill="#d0d0d0"/>
<text x="774" y="86.5" font-size="12" fill="#f0f0f0" stroke="#f0f0f0" stroke-width="0.26">颜色</text>
<text x="812" y="86.5" font-size="12" fill="#b4b4b4" stroke="#b4b4b4" stroke-width="0.26">色板</text>
<path d="M982 79 h5 l-2.500 3 z" fill="#d8d8d8"/><path d="M988 78.5 h7 M988 81.5 h7 M988 84.5 h7" stroke="#d8d8d8" stroke-width="1"/>
<rect x="783.500" y="111.500" width="17" height="17" fill="#fff" stroke="#222"/>
<rect x="771.500" y="99.500" width="21" height="21" fill="#000" stroke="#707070"/><rect x="773" y="101" width="18" height="18" fill="#000" stroke="#f4f4f4" stroke-width="1.600"/>
<text x="809.5" y="112.5" font-size="11" font-weight="bold" fill="#f0f0f0" stroke="#f0f0f0" stroke-width="0.24">R</text>
<rect x="825" y="103.0" width="79.500" height="5" fill="#333"/><rect x="826" y="104.0" width="77.500" height="3" fill="url(#gr)"/>
<path d="M825.500 109.5 l4.500 5.500 h-9 z" fill="#bbb" stroke="#666" stroke-width="0.800"/>
<rect x="909.500" y="100.5" width="49" height="18" fill="#3e3e3e" stroke="#4a4a4a"/>
<text x="912" y="114" font-size="11" fill="#f0f0f0" stroke="#f0f0f0" stroke-width="0.24">0</text>
<text x="809.5" y="136.9" font-size="11" font-weight="bold" fill="#f0f0f0" stroke="#f0f0f0" stroke-width="0.24">G</text>
<rect x="825" y="127.4" width="79.500" height="5" fill="#333"/><rect x="826" y="128.4" width="77.500" height="3" fill="url(#gg)"/>
<path d="M825.500 133.9 l4.500 5.500 h-9 z" fill="#bbb" stroke="#666" stroke-width="0.800"/>
<rect x="909.500" y="124.9" width="49" height="18" fill="#3e3e3e" stroke="#4a4a4a"/>
<text x="912" y="138.4" font-size="11" fill="#f0f0f0" stroke="#f0f0f0" stroke-width="0.24">0</text>
<text x="809.5" y="161.3" font-size="11" font-weight="bold" fill="#f0f0f0" stroke="#f0f0f0" stroke-width="0.24">B</text>
<rect x="825" y="151.8" width="79.500" height="5" fill="#333"/><rect x="826" y="152.8" width="77.500" height="3" fill="url(#gb)"/>
<path d="M825.500 158.3 l4.500 5.500 h-9 z" fill="#bbb" stroke="#666" stroke-width="0.800"/>
<rect x="909.500" y="149.3" width="49" height="18" fill="#3e3e3e" stroke="#4a4a4a"/>
<text x="912" y="162.8" font-size="11" fill="#f0f0f0" stroke="#f0f0f0" stroke-width="0.24">0</text>
<rect x="773" y="179" width="196" height="15.500" fill="#3a3a3a"/>
<rect x="774" y="180" width="186" height="14" fill="url(#spec)"/><rect x="774" y="180" width="186" height="14" fill="url(#specv)"/>
<rect x="960" y="180" width="8" height="7" fill="#fff"/><rect x="960" y="187" width="8" height="7" fill="#000"/>
<text x="774" y="215.5" font-size="12" fill="#b4b4b4" stroke="#b4b4b4" stroke-width="0.26">调整</text>
<text x="812" y="215.5" font-size="12" fill="#f0f0f0" stroke="#f0f0f0" stroke-width="0.26">样式</text>
<path d="M982 208 h5 l-2.500 3 z" fill="#d8d8d8"/><path d="M988 207.500 h7 M988 210.500 h7 M988 213.500 h7" stroke="#d8d8d8" stroke-width="1"/>
<path d="M988.500 231 h6 l-3 -3.500 z M988.500 309 h6 l-3 3.500 z" fill="#e0e0e0"/>
<text x="774" y="351.5" font-size="12" fill="#f0f0f0" stroke="#f0f0f0" stroke-width="0.26">图层</text>
<text x="812" y="351.5" font-size="12" fill="#b4b4b4" stroke="#b4b4b4" stroke-width="0.26">通道</text>
<text x="849" y="351.5" font-size="12" fill="#b4b4b4" stroke="#b4b4b4" stroke-width="0.26">路径</text>
<path d="M982 344 h5 l-2.500 3 z" fill="#d8d8d8"/><path d="M988 343.500 h7 M988 346.500 h7 M988 349.500 h7" stroke="#d8d8d8" stroke-width="1"/>
<rect x="771.500" y="359.500" width="67" height="19" rx="3" fill="url(#btn)" stroke="#383838"/>
<text x="793" y="373.5" font-size="12" fill="#dedede" stroke="#dedede" stroke-width="0.26">类型</text>
<circle cx="783" cy="368" r="3" fill="none" stroke="#ccc" stroke-width="1.300"/><path d="M781 370.500 l-3 3" stroke="#ccc" stroke-width="1.500"/>
<path d="M829 367 l3 -3.500 l3 3.500 z M829 370 l3 3.500 l3 -3.500 z" fill="#ddd"/>
<rect x="771.500" y="387.500" width="107" height="18" rx="3" fill="url(#btn)" stroke="#383838"/>
<text x="779" y="400.5" font-size="12" fill="#dedede" stroke="#dedede" stroke-width="0.26">正常</text>
<path d="M869 395 l3 -3.500 l3 3.500 z M869 398 l3 3.500 l3 -3.500 z" fill="#ddd"/>
<text x="887" y="400.5" font-size="12" fill="#dedede" stroke="#dedede" stroke-width="0.26">不透明度:</text>
<text x="774" y="427.5" font-size="12" fill="#dedede" stroke="#dedede" stroke-width="0.26">锁定:</text>
<text x="911" y="427.5" font-size="12" fill="#dedede" stroke="#dedede" stroke-width="0.26">填充:</text>
<rect x="943.500" y="387.500" width="33" height="19" fill="#444" stroke="#3a3a3a"/>
<rect x="977.500" y="387.500" width="17" height="19" rx="2" fill="url(#btn)" stroke="#3a3a3a"/>
<path d="M983 395 h6 l-3 3.500 z" fill="#ddd"/>
<text x="945.5" y="401" font-size="11" fill="#e8e4d0" stroke="#e8e4d0" stroke-width="0.24">100%</text>
<rect x="943.500" y="414.500" width="33" height="19" fill="#444" stroke="#3a3a3a"/>
<rect x="977.500" y="414.500" width="17" height="19" rx="2" fill="url(#btn)" stroke="#3a3a3a"/>
<path d="M983 422 h6 l-3 3.500 z" fill="#ddd"/>
<text x="945.5" y="428" font-size="11" fill="#e8e4d0" stroke="#e8e4d0" stroke-width="0.24">100%</text>
<text transform="translate(843,459) skewX(-12)" x="0" y="0" font-size="11.5" fill="#fff" stroke="#fff" stroke-width="0.25">背景</text>
<path d="M10.500 93 v12.500 l3.500 -3.500 h5 z" fill="#d2d2d2"/>
<path d="M22.500 98.500 v9 M18 103 h9" stroke="#d2d2d2" stroke-width="1.300"/><path d="M22.500 96.500 l2.200 2.500 h-4.400 z M22.500 109.500 l2.200 -2.500 h-4.400 z M16 103 l2.500 -2.200 v4.400 z M29 103 l-2.500 -2.200 v4.400 z" fill="#d2d2d2"/>
<rect x="12" y="119.500" width="13.500" height="12" fill="none" stroke="#d2d2d2" stroke-width="1.400" stroke-dasharray="3.500 1.800"/>
<path d="M31 135 v-3 l-3 3 z" fill="#c8c8c8"/>
<ellipse cx="18.500" cy="148.500" rx="7.500" ry="4.800" transform="rotate(-18 18.500 148.500)" fill="none" stroke="#d2d2d2" stroke-width="1.500"/><path d="M13 152 q-2 2.500 0.500 4 q-1 2 1.500 3.500" fill="none" stroke="#d2d2d2" stroke-width="1.300"/>
<path d="M31 160 v-3 l-3 3 z" fill="#c8c8c8"/>
<ellipse cx="15.500" cy="177" rx="5" ry="5.500" fill="none" stroke="#d2d2d2" stroke-width="1.200" stroke-dasharray="1.200 1.200"/><path d="M27 170 l1.500 1.500 l-7 8 q-3 3 -6 3 q3 -2 4 -5.500 z" fill="#d2d2d2"/>
<path d="M31 186 v-3 l-3 3 z" fill="#c8c8c8"/>
<path d="M14.500 196 v13 h13 M10.500 200.500 h12.500 v12.500" fill="none" stroke="#d2d2d2" stroke-width="2"/><path d="M27 196.500 l-10 10" stroke="#d2d2d2" stroke-width="1"/>
<path d="M31 212 v-3 l-3 3 z" fill="#c8c8c8"/>
<path d="M24 221 q2.500 -1 3.500 1 q1 2 -1.500 3.500 l-1.500 1 l1 1 l-1.500 1.500 l-1 -1 l-7 7 q-1.500 1.500 -3.500 1 q-0.500 -2 1 -3.500 l7 -7 l-1 -1 l1.500 -1.500 l1 1 z" fill="#d2d2d2"/>
<path d="M31 238 v-3 l-3 3 z" fill="#c8c8c8"/>
<rect x="4.500" y="245.500" width="29" height="22" rx="2" fill="#343434" stroke="#2a2a2a"/>
<g transform="translate(19,256) scale(1.0)"><path d="M-5.500 6.500 q-4.500 -4 -3.500 -9 q1.500 -4.500 6 -3.500 q2 0.500 3 2.500" fill="none" stroke="#d2d2d2" stroke-width="1.100" stroke-dasharray="1 1.100"/><g transform="rotate(-46)"><rect x="-9.500" y="-3.300" width="20.500" height="6.600" rx="3.300" fill="#8e8e8e" stroke="#c4c4c4" stroke-width="0.900"/><rect x="-2.500" y="-3.300" width="6.500" height="6.600" fill="#787878" stroke="#bcbcbc" stroke-width="0.600"/><path d="M-7 -1 h3 M-7 1 h3 M6 -1 h3 M6 1 h3" stroke="#6a6a6a" stroke-width="0.700"/></g></g>
<path d="M31 266 v-3 l-3 3 z" fill="#c8c8c8"/>
<path d="M28 272 l1.500 1.500 l-9.500 10.500 l-2.500 -2 z M17 283 l2.500 2 q-1.500 4 -8.500 4.500 q3.500 -2 3 -5 q1.500 -1.500 3 -1.500 z" fill="#d2d2d2"/>
<path d="M31 291 v-3 l-3 3 z" fill="#c8c8c8"/>
<path d="M16 299 q3.500 -2.500 6 0 q1.500 2 -0.500 4.500 v3 h5 v3.500 h-15 v-3.500 h5 v-3 q-2 -2.500 -0.500 -4.500 z M11 312 h16 v2 h-16 z" fill="#d2d2d2"/>
<path d="M31 316 v-3 l-3 3 z" fill="#c8c8c8"/>
<path d="M27 324 l1.500 1.500 l-8 9.500 l-2.500 -2 z M17.500 334 l2.500 2 q-1.500 3.500 -7.500 4 q3 -2 2.500 -4.500 q1 -1.500 2.500 -1.500 z" fill="#d2d2d2"/><path d="M11 331 a6 6 0 0 1 9 -5.500" fill="none" stroke="#d2d2d2" stroke-width="1.400"/><path d="M17.500 323 l4 2 l-3.500 3 z" fill="#d2d2d2"/>
<path d="M31 342 v-3 l-3 3 z" fill="#c8c8c8"/>
<path d="M17 351 h10 l-6 8 h-10 z" fill="#d2d2d2"/><path d="M11 360 h10 v4 h-10 z" fill="#a8a8a8"/><path d="M21 359.500 l6 -8 v4 l-6 8.500 z" fill="#8e8e8e"/>
<path d="M31 367 v-3 l-3 3 z" fill="#c8c8c8"/>
<rect x="10.500" y="376.500" width="16" height="13" fill="url(#gradtool)" stroke="#d8d8d8"/>
<path d="M31 393 v-3 l-3 3 z" fill="#c8c8c8"/>
<path d="M18.500 400 q6 7 6 11 q0 5 -6 5 q-6 0 -6 -5 q0 -4 6 -11 z" fill="#d2d2d2"/>
<path d="M31 418 v-3 l-3 3 z" fill="#c8c8c8"/>
<circle cx="16.500" cy="431" r="5" fill="#d2d2d2"/><path d="M19.500 435 l6 6" stroke="#d2d2d2" stroke-width="2.400" stroke-linecap="round"/>
<path d="M31 444 v-3 l-3 3 z" fill="#c8c8c8"/>
<path d="M23 454 l4.500 4.500 l-3 2 q-1 5 -4.500 7 l-7.500 2 l2 -7.500 q2 -3.500 7 -4.500 z" fill="#d2d2d2"/><circle cx="19.500" cy="463" r="1.300" fill="#535353"/><path d="M12.500 469.500 l6 -6" stroke="#535353" stroke-width="0.900"/>
<path d="M31 472 v-3 l-3 3 z" fill="#c8c8c8"/>
<text x="11.500" y="494" font-size="19" style="font-family:'Liberation Serif',serif" fill="#d2d2d2" stroke="#d2d2d2" stroke-width="0.42">T</text>
<path d="M31 497 v-3 l-3 3 z" fill="#c8c8c8"/>
<path d="M14 505 v15.500 l4 -4 l2.500 5.500 l2.500 -1 l-2.500 -5.500 h5.500 z" fill="#1a1a1a" stroke="#d0d0d0" stroke-width="0.800"/>
<path d="M31 523 v-3 l-3 3 z" fill="#c8c8c8"/>
<rect x="11.500" y="532.500" width="14" height="11" fill="#8a8a8a" stroke="#d8d8d8"/>
<path d="M31 548 v-3 l-3 3 z" fill="#c8c8c8"/>
<path d="M13 571 l-3 -4.500 q-0.500 -1.500 1 -1.500 l2.500 2 v-7 q1 -1.500 2 0 v4.500 l0.500 -6.500 q1 -1.500 2 0 l0.500 6.500 l1 -5.500 q1 -1.500 2 0 v6 l1.500 -3.500 q1.500 -1 1.800 0.500 l-1.300 6.500 q-0.500 3.500 -2 5 h-6.500 z" fill="#d2d2d2"/>
<path d="M31 577 v-3 l-3 3 z" fill="#c8c8c8"/>
<circle cx="16.500" cy="588" r="5" fill="#8a8a8a" stroke="#d2d2d2" stroke-width="1.600"/><path d="M20.500 592 l6 6" stroke="#d2d2d2" stroke-width="2.600" stroke-linecap="round"/>
<rect x="7" y="611" width="6" height="6" fill="#fff" stroke="#ddd" stroke-width="0.500"/><rect x="4.500" y="608.500" width="6" height="6" fill="#111" stroke="#ddd" stroke-width="0.800"/>
<path d="M24 609.500 q4 0 4 4" fill="none" stroke="#d2d2d2" stroke-width="1.300"/><path d="M22 609.500 l3 -2.500 v5 z M28 616 l-2.500 -3 h5 z" fill="#d2d2d2"/>
<rect x="14.500" y="633.500" width="18" height="18" fill="#fff" stroke="#ddd"/>
<rect x="4.500" y="623.500" width="19" height="19" fill="#000" stroke="#3a3a3a"/><rect x="5.500" y="624.500" width="17" height="17" fill="#000" stroke="#e8e8e8"/>
<rect x="10.500" y="659.500" width="16" height="12" fill="#3c3c3c" stroke="#d2d2d2" stroke-width="1.200"/><circle cx="18.500" cy="665.500" r="3.600" fill="none" stroke="#d2d2d2" stroke-width="1" stroke-dasharray="1 1"/>
<rect x="13.500" y="686.500" width="12" height="9" fill="#777" stroke="#d2d2d2"/><rect x="10.500" y="690.500" width="12" height="9" fill="#666" stroke="#d2d2d2"/>
<path d="M31 703 v-3 l-3 3 z" fill="#c8c8c8"/>
<rect x="35.500" y="243.500" width="169.500" height="100.500" fill="#5e5e5e"/><path d="M36 344 V244 H204.500" fill="none" stroke="#787878"/><path d="M35.500 343.500 H204.500 V243.500" fill="none" stroke="#383838"/>
<rect x="44" y="252" width="4" height="4" fill="#fff"/>
<text x="79" y="257.5" font-size="11.8" fill="#ececec" stroke="#ececec" stroke-width="0.26">污点修复画笔工具</text>
<text x="190" y="257" font-size="9.5" fill="#dfe6f2">J</text>
<text x="79" y="276" font-size="11.8" fill="#ececec" stroke="#ececec" stroke-width="0.26">修复画笔工具</text>
<text x="190" y="275.5" font-size="9.5" fill="#dfe6f2">J</text>
<text x="79" y="294.5" font-size="11.8" fill="#ececec" stroke="#ececec" stroke-width="0.26">修补工具</text>
<text x="190" y="294" font-size="9.5" fill="#dfe6f2">J</text>
<text x="79" y="313" font-size="11.8" fill="#ececec" stroke="#ececec" stroke-width="0.26">内容感知移动工具</text>
<text x="190" y="312.5" font-size="9.5" fill="#dfe6f2">J</text>
<text x="79" y="331.5" font-size="11.8" fill="#ececec" stroke="#ececec" stroke-width="0.26">红眼工具</text>
<text x="190" y="331" font-size="9.5" fill="#dfe6f2">J</text>
<g transform="translate(65,255) scale(1.0)"><path d="M-5.500 6.500 q-4.500 -4 -3.500 -9 q1.500 -4.500 6 -3.500 q2 0.500 3 2.500" fill="none" stroke="#d2d2d2" stroke-width="1.100" stroke-dasharray="1 1.100"/><g transform="rotate(-46)"><rect x="-9.500" y="-3.300" width="20.500" height="6.600" rx="3.300" fill="#8e8e8e" stroke="#c4c4c4" stroke-width="0.900"/><rect x="-2.500" y="-3.300" width="6.500" height="6.600" fill="#787878" stroke="#bcbcbc" stroke-width="0.600"/><path d="M-7 -1 h3 M-7 1 h3 M6 -1 h3 M6 1 h3" stroke="#6a6a6a" stroke-width="0.700"/></g></g>
<g transform="translate(65,273.5) scale(1.0)"><g transform="rotate(-46)"><rect x="-9.500" y="-3.300" width="20.500" height="6.600" rx="3.300" fill="#8e8e8e" stroke="#c4c4c4" stroke-width="0.900"/><rect x="-2.500" y="-3.300" width="6.500" height="6.600" fill="#787878" stroke="#bcbcbc" stroke-width="0.600"/><path d="M-7 -1 h3 M-7 1 h3 M6 -1 h3 M6 1 h3" stroke="#6a6a6a" stroke-width="0.700"/></g></g>
<rect x="58" y="286" width="13" height="12" rx="3" fill="#8c8c8c" stroke="#d2d2d2" stroke-width="1.300" stroke-dasharray="1.300 1.300"/>
<path d="M57 305 q4 0 7 4 q3 5 8 5 M57 314 q4 0 7 -4 q3 -5 8 -5" fill="none" stroke="#d2d2d2" stroke-width="2"/><path d="M70 302 l4 2.500 l-4 2.500 z M70 311.500 l4 2.500 l-4 2.500 z M62 316 l2.500 -2 l2.500 2 z" fill="#d2d2d2"/>
<path d="M56 329.500 h8 M60 325.500 v8" stroke="#d2d2d2" stroke-width="1.300"/><path d="M62 332 q6 -6 12 0 q-6 5 -12 0 z" fill="none" stroke="#d2d2d2" stroke-width="1.400"/><circle cx="68" cy="332" r="2.200" fill="#d2d2d2"/>
<path d="M23 253.800 L50 258.500 L49.500 254 L63 265 L45 268.500 L46 265 L23 255.200 Z" fill="#e94646"/>
<ellipse cx="107.800" cy="274.400" rx="54.500" ry="13.800" fill="none" stroke="#7a27c9" stroke-width="4"/>
<g transform="translate(2.500,0)"><rect x="738.500" y="88.500" width="4" height="4" fill="none" stroke="#c2c2c2"/><rect x="738.500" y="94.500" width="4" height="4" fill="none" stroke="#c2c2c2"/><rect x="738" y="100" width="5" height="5" fill="#aaa"/>
<path d="M747 90 q7 1 5.500 8 q-1 4 -5 6.500 q3.500 -4 3 -8 q-0.500 -3 -3.500 -4 z" fill="#c2c2c2"/><path d="M745.500 91 l4.500 -3.500 v6 z" fill="#c2c2c2"/></g>
<path d="M740 117 v15 l15 -7.500 z" fill="#bdbdbd"/>
<path d="M742 163 h8 v9 h-8 z" fill="#c4c4c4"/><path d="M743.500 163 l-3 -7 q1 -2 2.500 0 l2 7 z M746 163 l0 -9 q1.500 -2 2.500 0 l-0.500 9 z M748.500 163 l3.500 -7 q2 -1 2.500 1 l-4 6.500 z" fill="#c2c2c2"/>
<path d="M746 185.500 h11 v2 h-11 z M738 183 q5 0.500 9 3.500 q-3 3 -6.500 2.500 q-2.500 -2 -2.500 -6 z" fill="#c2c2c2"/><path d="M738 193 h12 v2 h-12 z M750 194 l5.500 -4.500 q2 5 0 9.500 z" fill="#c2c2c2"/>
<rect x="775" y="228" width="16" height="16" fill="#fff" stroke="#222" stroke-width="0.800"/><path d="M773 226 L793 246" stroke="#e01020" stroke-width="1.800"/>
<rect x="807" y="229" width="16" height="16" fill="#1a1a1a"/><rect x="806" y="228" width="15" height="15" fill="url(#s1)" stroke="#a00" stroke-width="1"/>
<rect x="833.5" y="224.5" width="23" height="23" rx="4" fill="none" stroke="#d8d8b0" stroke-width="1.200"/><rect x="836" y="227" width="18" height="18" rx="2" fill="#535353" stroke="#c8c8a0" stroke-width="1.200"/>
<rect x="870" y="229" width="16" height="16" rx="2" fill="#3a3a3a"/><rect x="868.5" y="227.5" width="16" height="16" rx="2.500" fill="url(#s3)"/>
<rect x="900" y="228" width="15" height="15" fill="url(#s4)"/><path d="M900 228 l7.500 6 l7.500 -6 z" fill="#a8d0f4" opacity="0.800"/>
<rect x="931" y="228" width="15" height="15" fill="#a8a8a8"/>
<rect x="775" y="259" width="15" height="15" fill="url(#s6)"/>
<rect x="806" y="259" width="15" height="15" fill="#6c5a3c"/>
<rect x="837" y="259" width="15" height="15" fill="url(#s8)"/>
<rect x="869" y="259" width="15" height="15" fill="url(#s9)"/>
<rect x="900" y="259" width="15" height="15" fill="#181818"/><path d="M900 263 q4 -5 8 -2 q4 3 7 0 v5 q-5 3 -8 0 q-4 -3 -7 1 z" fill="#30b8c8"/><path d="M900 268 q4 -3 7 1 q3 4 8 1 v4 h-15 z" fill="#e8d020"/><path d="M906 259 h6 l-2 4 z" fill="#d04080"/>
<rect x="931" y="259" width="15" height="15" fill="#ffe800" stroke="#c8a000"/><rect x="934.5" y="262.5" width="8" height="8" fill="#a89400" stroke="#d8c400" stroke-width="1"/>
<rect x="775" y="290" width="15" height="15" fill="url(#s12)"/>
<rect x="806" y="290" width="15" height="15" fill="url(#s13)" stroke="#9ab8e8" stroke-width="0.800"/>
<rect x="837" y="290" width="15" height="15" fill="url(#s14)"/>
<rect x="869" y="290" width="15" height="15" fill="#e8e8e8"/><path d="M870 292 h3 v2 h2 v-3 h3 v4 h-2 v3 h4 v-5 h2 v8 h-3 v3 h-4 v-2 h-3 v2 h-2 z" fill="#555"/>
<rect x="902" y="292" width="15" height="15" fill="#2a2a2a"/><rect x="900" y="290" width="15" height="15" fill="url(#s16)"/>
<rect x="932.5" y="291.5" width="15" height="15" fill="#3e3e3e"/><rect x="931" y="290" width="15" height="15" fill="#555"/>
<circle cx="907.500" cy="327" r="4.500" fill="none" stroke="#909090" stroke-width="1.400"/><path d="M904.500 324 l6 6" stroke="#909090" stroke-width="1.400"/>
<path d="M933.500 322 h9 v10 h-3 v-7 h-6 z" fill="#909090"/><path d="M934 326 h4 v6 z" fill="#7a7a7a"/>
<path d="M962.500 324 h8 M965 322.500 h3 M963.500 325.500 l0.800 7 h5.400 l0.800 -7" fill="none" stroke="#808080" stroke-width="1.200"/><path d="M965.500 326 v6 M967.500 326 v6" stroke="#808080" stroke-width="0.800"/>
<path d="M993 333 l4 -4 M995 333 l2 -2 M991 333 l6 -6" stroke="#6e6e6e" stroke-width="0.700" stroke-dasharray="1 1"/>
<rect x="859.500" y="362.500" width="12" height="10" fill="none" stroke="#acacac"/><path d="M861 371 l3 -4 l2 2.500 l2 -1.500 l2.500 3 z" fill="#acacac"/><circle cx="868.500" cy="365.500" r="1" fill="#acacac"/>
<circle cx="888.500" cy="368" r="5" fill="none" stroke="#acacac" stroke-width="1.200"/><path d="M885 371.500 a5 5 0 0 1 7 -7 z" fill="#acacac"/>
<text x="906.500" y="373.500" font-size="14" style="font-family:'Liberation Serif',serif" fill="#acacac" stroke="#acacac" stroke-width="0.31">T</text>
<rect x="931.500" y="364.500" width="8" height="8" fill="none" stroke="#acacac"/><rect x="930" y="363" width="3" height="3" fill="#acacac"/><rect x="938" y="363" width="3" height="3" fill="#acacac"/><rect x="930" y="371" width="3" height="3" fill="#acacac"/><rect x="938" y="371" width="3" height="3" fill="#acacac"/>
<path d="M956.500 363.500 h5 l3 3 v8 h-8 z" fill="none" stroke="#acacac"/><rect x="954" y="369" width="5" height="5" fill="#acacac"/>
<rect x="988.500" y="361.500" width="7" height="15" rx="1" fill="#484848" stroke="#3a3a3a"/><rect x="989" y="362" width="6" height="6" fill="#6a6a6a"/>
<rect x="810.500" y="418.500" width="10" height="10" fill="#666" stroke="#999" stroke-width="0.800"/><path d="M811 419 h3 v3 h-3 z M817 419 h3 v3 h-3 z M814 422 h3 v3 h-3 z M811 425 h3 v3 h-3 z M817 425 h3 v3 h-3 z" fill="#aaa"/>
<path d="M845 417 l1 1 l-7 8 l-2 -1.500 z M836.500 425.500 l2 1.500 q-1 2.500 -6 3 q2.500 -1.500 2 -3.500 z" fill="#acacac"/>
<path d="M858.500 418 v11 M853 423.500 h11" stroke="#acacac" stroke-width="1.200"/><path d="M858.500 416 l2.200 2.500 h-4.400 z M858.500 431 l2.200 -2.500 h-4.400 z M851 423.500 l2.500 -2.200 v4.400 z M866 423.500 l-2.500 -2.200 v4.400 z" fill="#acacac"/>
<rect x="876" y="423" width="9" height="7" fill="#acacac"/><path d="M878 423 v-2.500 a2.500 2.500 0 0 1 5 0 v2.500" fill="none" stroke="#acacac" stroke-width="1.300"/>
<path d="M776 454 q6.500 -6 13 0 q-6.500 6 -13 0 z" fill="#d8d8d8"/><circle cx="782.500" cy="454" r="2.600" fill="#333"/><circle cx="783.200" cy="453.200" r="0.900" fill="#ddd"/>
<rect x="801" y="442" width="32" height="25" fill="#111"/>
<g transform="translate(802,443) scale(0.0577,0.0627)"><g transform="translate(-123,-217)"><g transform="translate(123,217)" clip-path="url(#pclip)">
<rect x="0" y="0" width="520" height="367" fill="#f6d4c2"/>
<g filter="url(#b30)">
<ellipse cx="570" cy="340" rx="140" ry="170" fill="#e9a690"/>
<ellipse cx="555" cy="60" rx="100" ry="120" fill="#f0c0ab"/>
<ellipse cx="480" cy="200" rx="50" ry="80" fill="#f2c5ae"/>
<ellipse cx="200" cy="40" rx="120" ry="60" fill="#fdece3"/>
<ellipse cx="190" cy="290" rx="90" ry="90" fill="#fbe3d7"/>
<ellipse cx="330" cy="290" rx="90" ry="50" fill="#fae0d3"/>
<ellipse cx="360" cy="20" rx="90" ry="30" fill="#f8dccc"/>
</g>
<g filter="url(#b12)">
<path d="M40 -10 L75 -10 L70 60 L75 125 L60 125 Z" fill="#f2c7b0"/>
<ellipse cx="212" cy="178" rx="26" ry="45" fill="#f1c3ac"/>
<ellipse cx="180" cy="140" rx="30" ry="20" fill="#f0c4ae"/>
<path d="M235 142 Q300 104 370 140 Q400 158 425 185 L385 172 Q310 122 235 150 Z" fill="#e0ab8a"/>
<ellipse cx="380" cy="148" rx="40" ry="17" fill="#d69e7a" transform="rotate(27 380 148)"/>
<ellipse cx="330" cy="125" rx="50" ry="10" fill="#e6b596" transform="rotate(8 330 125)"/>
<path d="M250 214 Q320 232 370 192 L392 176 L400 200 Q335 252 255 228 Z" fill="#e6b29c"/>
<ellipse cx="362" cy="200" rx="30" ry="12" fill="#d8a48e" transform="rotate(-33 362 200)"/>
</g>
<g filter="url(#b2)">
<path d="M-10 -10 L45 -10 L44 60 L49 118 L58 127 L120 171 L128 176 L128 223 L118 227 L101 231 L104 251 L122 259 L104 300 L80.600 367 L80 377 L-10 377 Z" fill="#ece9ef"/>
</g>
<g filter="url(#b3)">
<path d="M56 124 L76 130 L102 148 L127 170 L120 182 L100 171 L80 157 L60 150 Z" fill="#c29b80"/>
<path d="M60 140 L80 150 L100 165 L120 180 L118 186 L98 174 L78 160 L60 152 Z" fill="#a8836a"/>
<path d="M56 122 L78 128 L104 146 L128 168 L128 160 L106 138 L80 120 L58 112 Z" fill="#ecc5ac"/>
<path d="M100 226 Q114 222 128 228 L126 258 Q108 252 100 226 Z" fill="#f1c4b6"/>
</g>
<g filter="url(#b2)">
<ellipse cx="104" cy="186" rx="6" ry="11" fill="#ddd5d9"/>
<ellipse cx="121" cy="197" rx="9.500" ry="27" fill="url(#fariris)"/>
<path d="M121 170 Q108 196 122 224" stroke="#6e5238" stroke-width="2.500" fill="none"/>
<path d="M84 160 Q104 166 124 174" stroke="#7a5c46" stroke-width="3" fill="none" opacity="0.800"/>
</g>
<g filter="url(#b2)" stroke="#b6b1bc" stroke-width="2.200" fill="none" stroke-linecap="round" opacity="0.850">
<path d="M92 174 Q67.0 177.0 42 170"/>
<path d="M92 174 Q71.0 169.0 50 154"/>
<path d="M92 174 Q75.0 165.5 58 147"/>
<path d="M92 174 Q69.0 184.0 46 184"/>
<path d="M92 174 Q75.0 190.5 58 197"/>
<path d="M92 174 Q79.0 193.0 66 202"/>
<path d="M92 174 Q86.0 195.0 80 206"/>
<path d="M98 230 L88 246 M102 236 L96 250" stroke-width="1.600"/>
</g>
<g filter="url(#b5)">
<path d="M140.4 116.9 L151.9 101.0 L172.8 88.4 L193.9 78.0 L230.3 62.5 L261.7 51.0 L293.7 43.6 L330.8 44.5 L371.3 56.2 L396.3 67.0 L414.7 78.7 L413.3 81.3 L393.7 73.0 L368.7 65.8 L329.2 59.5 L296.3 62.4 L268.3 71.0 L239.7 83.5 L206.1 102.0 L187.2 113.6 L168.1 125.0 L151.6 131.1 Z" fill="#b98c78"/>
</g>
<g filter="url(#b3)">
<path d="M143.8 121.2 L156.8 108.2 L177.1 96.0 L197.6 85.2 L233.1 68.8 L263.7 57.0 L294.5 49.2 L330.3 49.0 L370.5 59.1 L395.5 68.8 L414.3 79.5 L413.7 80.7 L394.4 71.5 L369.3 63.4 L329.6 55.7 L295.7 57.7 L266.7 66.0 L237.3 78.3 L203.1 96.0 L183.6 107.3 L164.1 119.0 L148.8 127.5 Z" fill="#98685a"/>
</g>
<g filter="url(#b2)">
<path d="M232 150 C250 140 270 137 300 136 C334 137 362 150 384 173 C366 190 348 201 319 210 C290 215 260 215 243 212 C239 190 235 168 232 150 Z" fill="#e2a88f"/>
</g><g filter="url(#b1)">
<path d="M236 152 C250 144 270 141 300 140 C330 141 356 153 377 173 C362 186 345 197 318 206 C290 211 262 211 247 209 C243 190 239 168 236 152 Z" fill="#f5f1f3"/>
<path d="M338 146 Q362 158 377 173 Q360 188 338 199 Z" fill="#d3d3dc"/>
<path d="M355 156 L377 173 L355 190 Z" fill="#c9a8a0"/>
<path d="M236 152 Q238 190 247 209 L256 208 Q249 180 252 147 Z" fill="#e9a58c"/>
<circle cx="246" cy="207" r="3.200" fill="#cf4e3a"/>
</g>
<g clip-path="url(#eyeclip)">
<path d="M240 146 Q300 134 380 168 L380 178 Q300 146 240 158 Z" fill="#8a7a78" opacity="0.450" filter="url(#b2)"/>
<circle cx="307" cy="174.500" r="32.500" fill="url(#iris)" filter="url(#b05)"/>
<path d="M300 190 Q315 200 334 186 Q325 204 305 204 Z" fill="#c09458" opacity="0.700" filter="url(#b2)"/>
<circle cx="310.500" cy="170.500" r="8.600" fill="#0c0808" filter="url(#b05)"/>
<path d="M277 160 Q288 154 305 156 L305 186 Q292 191 280 193 Q272 178 277 160 Z" fill="#cdc7ca" filter="url(#b1)"/>
<path d="M280 186 Q292 184 305 180 L305 186 Q292 191 281 193 Z" fill="#b5a294" filter="url(#b1)"/>
<path d="M308 154 L322 155 L324 161 L316 163 L309 160 Z" fill="#ecdcd8" filter="url(#b1)"/>
<g clip-path="url(#irisclip)"><path d="M268 134 Q307 128 347 144 L347 158 Q307 150 268 157 Z" fill="#2a1c12" opacity="0.850" filter="url(#b2)"/></g>
</g>
<g filter="url(#b1)" fill="none" stroke-linecap="round">
<path d="M300 139.500 C330 141 356 153 377 172 Q395 180 416 182" stroke="#6b4f3c" stroke-width="2.500"/>
<path d="M318 146 C338 150 360 161 376 174" stroke="#85706a" stroke-width="6.500" opacity="0.900"/>
<path d="M234 150.500 C250 143 270 140.500 300 139.500" stroke="#33251c" stroke-width="5.500"/>
<path d="M300 139.500 C322 140.500 342 146 362 158" stroke="#3e2e24" stroke-width="5"/>
<path d="M252 133 Q300 118 345 135 Q385 152 420 176" stroke="#b98a6a" stroke-width="3.500" opacity="0.600"/>
<path d="M247 210.500 C262 213 290 213 318 207.500 C346 198 363 187 378 174" stroke="#d29d92" stroke-width="3.500"/>
<path d="M250 216 C264 219 292 219 320 213 C348 204 367 192 382 178" stroke="#dcaaa0" stroke-width="7" opacity="0.650" filter="url(#b2)"/>
</g>
<path d="M232 152 L238 140 L262 130 L300 130 L318 138 L300 142 L262 143 L240 150 Z" fill="#3a2a22" opacity="0.400" filter="url(#b2)"/>
<g fill="none" stroke="#2a1c14" stroke-linecap="round" filter="url(#b05)">
<path d="M234.3 150.3 Q216.2 150.0 202.4 138.2" stroke-width="1.5"/>
<path d="M236.5 149.2 Q222.3 142.5 215.6 128.3" stroke-width="1.5"/>
<path d="M242 147 Q231.2 134.1 231 117.3" stroke-width="1.5"/>
<path d="M250.8 144.8 Q245.1 128.9 250.8 112.9" stroke-width="1.4"/>
<path d="M261.8 142.6 Q260.7 129.3 268.4 118.4" stroke-width="1.3"/>
<path d="M275 140.4 Q276.6 129.3 284.9 121.7" stroke-width="1.2"/>
<path d="M288.2 140.4 Q291.8 129.8 301.4 123.9" stroke-width="1.1"/>
<path d="M234.3 152.5 Q217.7 161.6 199.1 158" stroke-width="1.4"/>
<path d="M234.3 154.7 Q221.8 173.5 200.2 180" stroke-width="1.3"/>
<path d="M235.4 155.8 Q225.7 166.8 211.2 169" stroke-width="1.2"/>
<path d="M239 148 Q225.8 138.1 222 122" stroke-width="1.1"/>
<path d="M246 146 Q237.2 131.1 240 114" stroke-width="1.1"/>
<path d="M256 143.5 Q252.4 128.7 259 115" stroke-width="1.1"/>
<path d="M268 141.5 Q268.6 129.1 277 120" stroke-width="1"/>
<path d="M281 140.4 Q283.9 129.5 293 123" stroke-width="1"/>
<path d="M235 151 Q220.5 154.5 207 148" stroke-width="1.1"/>
<path d="M296 140 Q300.2 131.2 309 127" stroke-width="0.9"/>
<path d="M304 140.5 Q308.1 133.1 316 130" stroke-width="0.9"/>
</g>
<g fill="none" stroke="#c39888" stroke-width="0.900" opacity="0.550" filter="url(#b05)">
<path d="M262 212.0 L256 221.0"/>
<path d="M270 212.0 L265 221.0"/>
<path d="M280 212.0 L276 221.0"/>
<path d="M292 212.0 L290 221.0"/>
<path d="M305 211.0 L305 220.0"/>
<path d="M320 208.0 L323 217.0"/>
<path d="M335 205.0 L340 214.0"/>
<path d="M350 202.0 L357 211.0"/>
</g>
</g></g></g>
<rect x="959.500" y="453.500" width="8" height="6" fill="none" stroke="#e0e0e0" stroke-width="1.200"/><path d="M961 453 v-2.500 a2.500 2.500 0 0 1 5 0 v2.500" fill="none" stroke="#e0e0e0" stroke-width="1.200"/>
<rect x="803" y="708.500" width="6" height="4" rx="2" fill="none" stroke="#8c8c8c" stroke-width="1.300"/><rect x="808" y="708.500" width="6" height="4" rx="2" fill="none" stroke="#8c8c8c" stroke-width="1.300"/>
<text transform="translate(829,715.5) skewX(-12)" x="0" y="0" font-size="12.5" style="font-family:'Liberation Serif',serif" fill="#8c8c8c" stroke="#8c8c8c" stroke-width="0.28">fx</text>
<rect x="855" y="706" width="12" height="10" fill="#8c8c8c"/><circle cx="861" cy="711" r="2.600" fill="#535353"/>
<circle cx="887" cy="711" r="5" fill="none" stroke="#8c8c8c" stroke-width="1.300"/><path d="M883.500 714.500 a5 5 0 0 1 7 -7 z" fill="#8c8c8c"/><path d="M895 715 h4 l-2 2.500 z" fill="#8c8c8c"/>
<path d="M908 706 h5 l1 1.500 h7 v8.500 h-13 z" fill="#8c8c8c"/>
<path d="M935.500 706 h9 v10 h-3 v-7 h-6 z" fill="#8c8c8c"/><path d="M936 710 h4 v6 z" fill="#707070"/>
<path d="M961.500 708 h9 M964.500 706.500 h3 M962.500 709.500 l0.800 7 h5.400 l0.800 -7" fill="none" stroke="#707070" stroke-width="1.200"/><path d="M965 710 v6 M967 710 v6" stroke="#707070" stroke-width="0.800"/>
<rect x="992" y="648" width="8" height="57" rx="2" fill="#2f3e55" stroke="#222" stroke-width="0.600"/>
<rect x="995" y="658" width="4" height="3" fill="#c06050"/>
<rect x="995" y="662" width="4" height="3" fill="#c87848"/>
<rect x="995" y="666" width="4" height="3" fill="#c89048"/>
<rect x="995" y="670" width="4" height="3" fill="#c8a848"/>
<rect x="995" y="674" width="4" height="3" fill="#b8b050"/>
<rect x="995" y="678" width="4" height="3" fill="#98b058"/>
<rect x="995" y="682" width="4" height="3" fill="#78b068"/>
<rect x="995" y="686" width="4" height="3" fill="#58b088"/>
<rect x="995" y="690" width="4" height="3" fill="#48a8a0"/>
<rect x="995" y="694" width="4" height="3" fill="#4898a8"/>
<g transform="translate(28.5,44.5) scale(1.0)"><path d="M-5.500 6.500 q-4.500 -4 -3.500 -9 q1.500 -4.500 6 -3.500 q2 0.500 3 2.500" fill="none" stroke="#d2d2d2" stroke-width="1.100" stroke-dasharray="1 1.100"/><g transform="rotate(-46)"><rect x="-9.500" y="-3.300" width="20.500" height="6.600" rx="3.300" fill="#8e8e8e" stroke="#c4c4c4" stroke-width="0.900"/><rect x="-2.500" y="-3.300" width="6.500" height="6.600" fill="#787878" stroke="#bcbcbc" stroke-width="0.600"/><path d="M-7 -1 h3 M-7 1 h3 M6 -1 h3 M6 1 h3" stroke="#6a6a6a" stroke-width="0.700"/></g></g>
<circle cx="655" cy="47" r="6.500" fill="none" stroke="#a8a8a8" stroke-width="1.100"/><circle cx="655" cy="47" r="3.500" fill="none" stroke="#a8a8a8" stroke-width="1.100"/><circle cx="655" cy="47" r="1" fill="#a8a8a8"/><path d="M656.500 45.500 l7.500 -8 l2 2 l-7.500 8 z" fill="#b4b4b4" stroke="#535353" stroke-width="0.600"/>
</svg>
</body></html>
